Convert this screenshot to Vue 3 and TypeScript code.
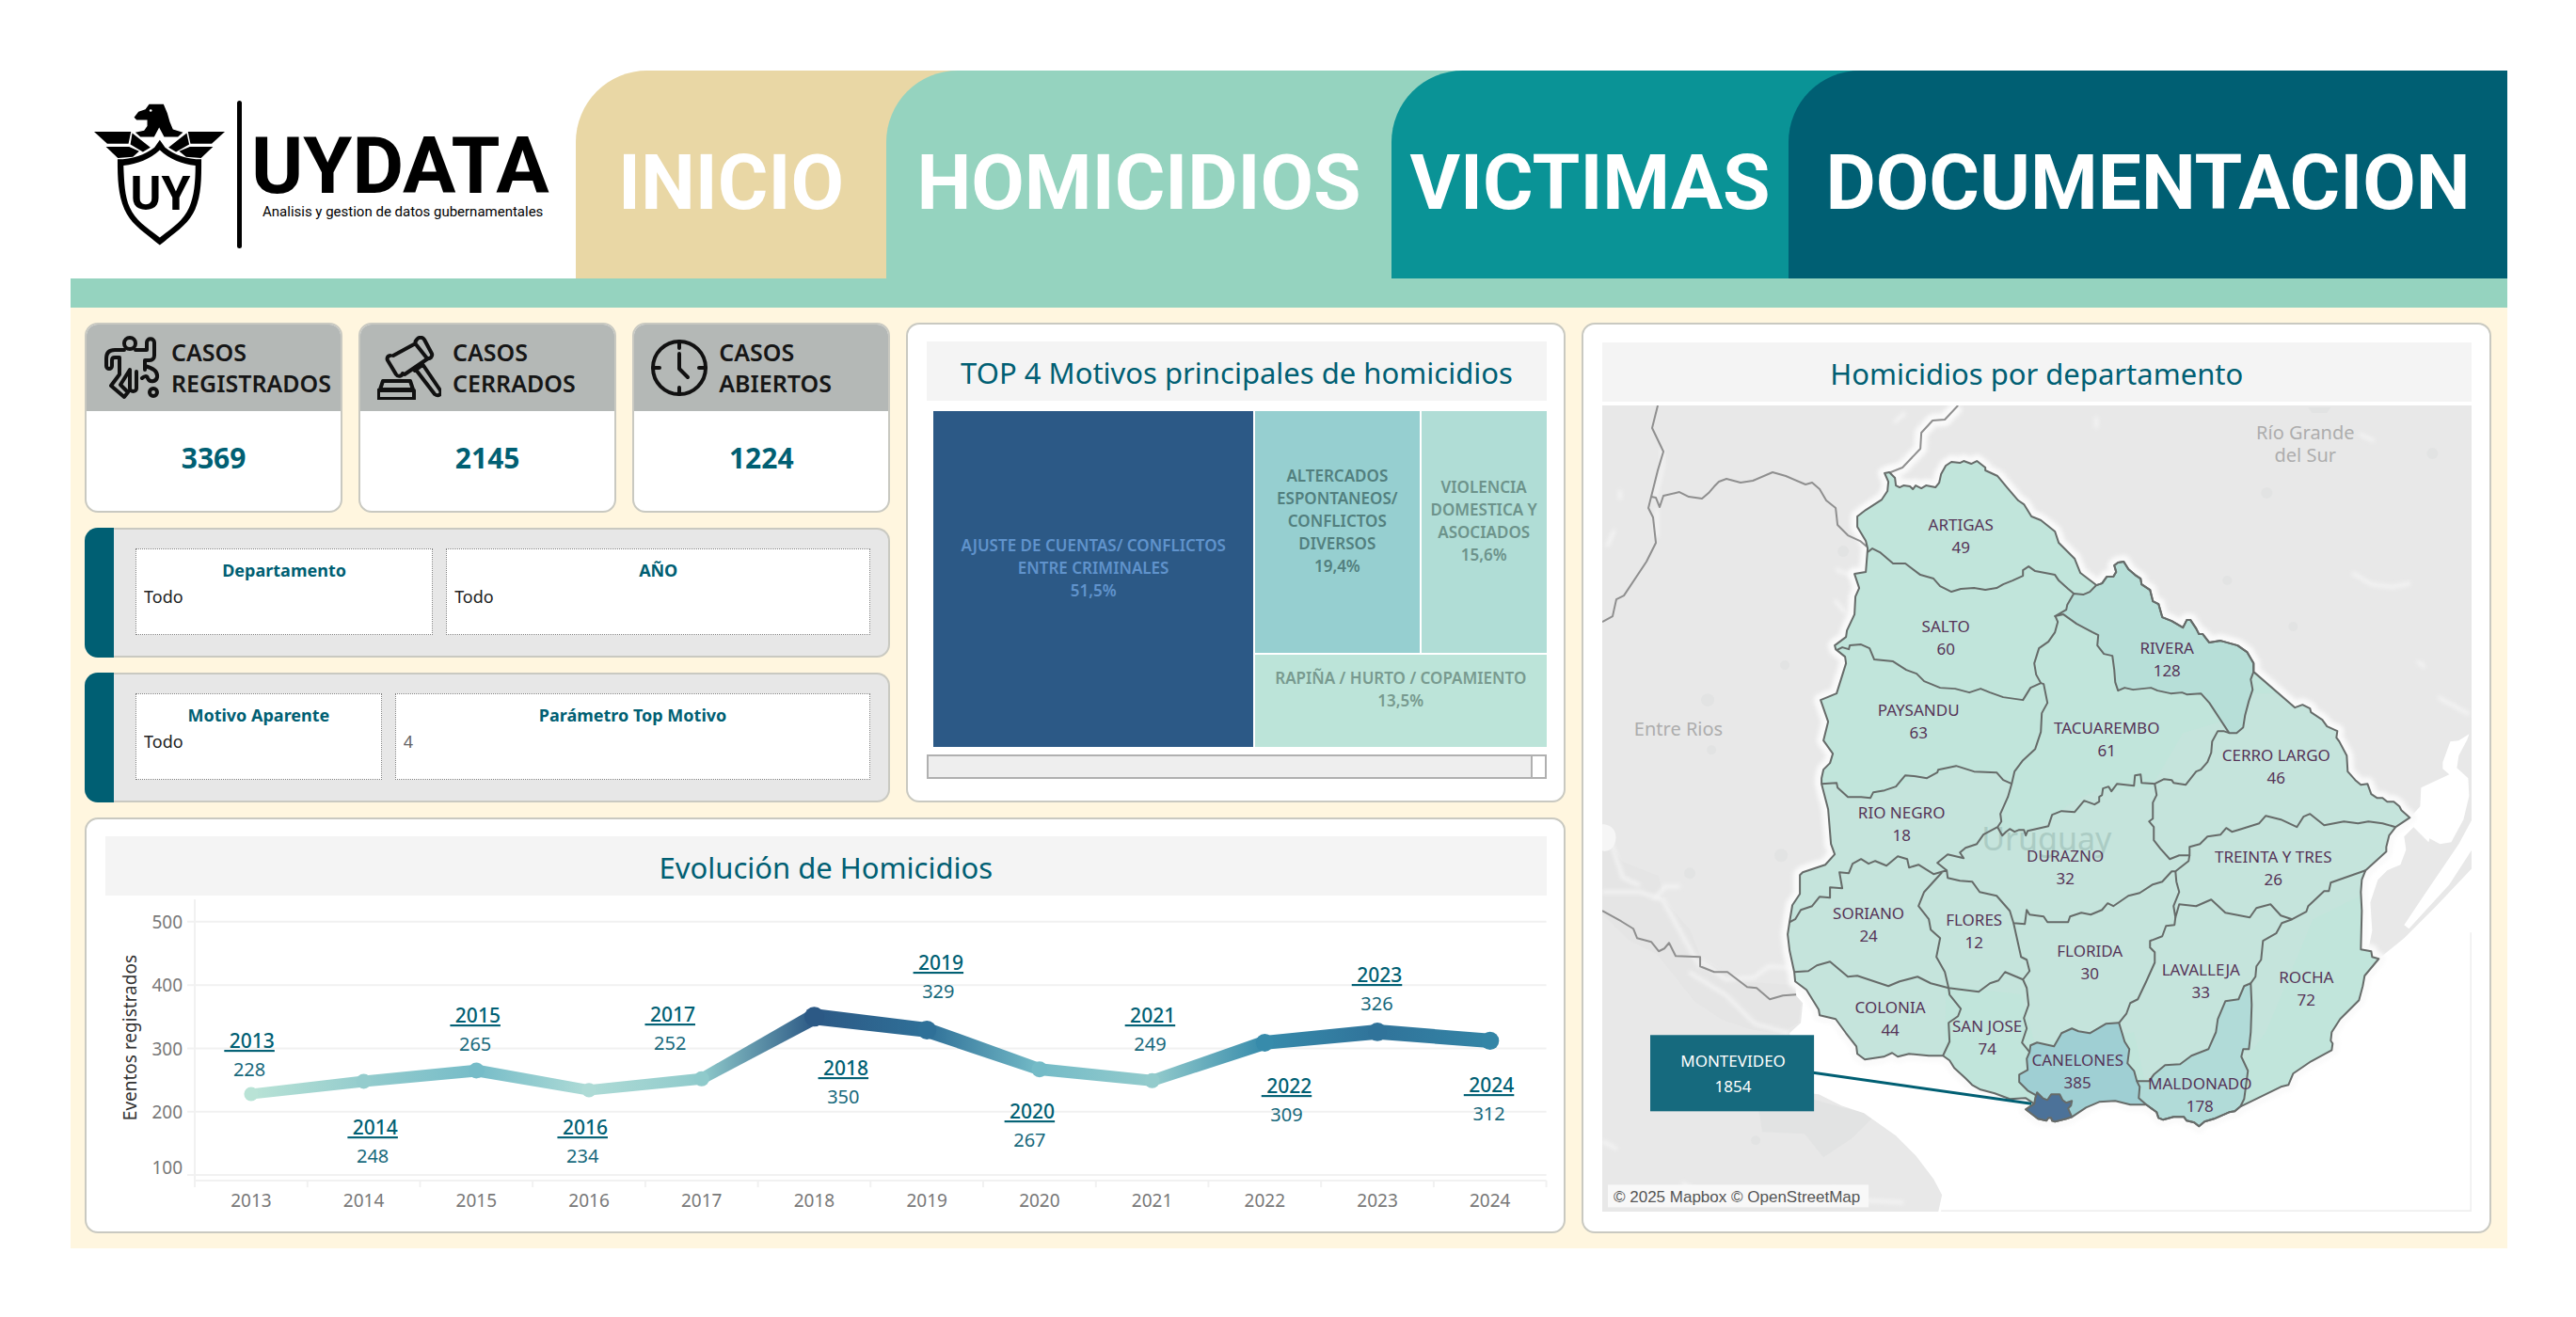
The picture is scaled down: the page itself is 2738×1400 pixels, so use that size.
<script setup lang="ts">
import { ref } from 'vue'

interface Tab { label: string; tone: string }
interface Kpi { title: string[]; value: number; icon: string }
interface Sample { year: number; value: number; x: number; y: number; color: string }
interface Department { name: string; total: number; x: number; y: number }

const tabs: Tab[] = [
  { label: 'INICIO', tone: 'sand' },
  { label: 'HOMICIDIOS', tone: 'mint' },
  { label: 'VICTIMAS', tone: 'teal' },
  { label: 'DOCUMENTACION', tone: 'deep' },
]

const kpis: Kpi[] = [
  { title: ['CASOS', 'REGISTRADOS'], value: 3369, icon: 'body' },
  { title: ['CASOS', 'CERRADOS'], value: 2145, icon: 'gavel' },
  { title: ['CASOS', 'ABIERTOS'], value: 1224, icon: 'clock' },
]

const departamento = ref('Todo')
const anio = ref('Todo')
const motivo = ref('Todo')
const topMotivo = ref('4')

// x / y give the place of the year caption inside the plot
const samples: Sample[] = [
  { year: 2013, value: 228, x: 153, y: 162, color: '#b9e3d6' },
  { year: 2014, value: 248, x: 284, y: 254, color: '#94cccd' },
  { year: 2015, value: 265, x: 393, y: 135, color: '#76bcc8' },
  { year: 2016, value: 234, x: 507, y: 254, color: '#aedbd6' },
  { year: 2017, value: 252, x: 600, y: 134, color: '#8fcacb' },
  { year: 2018, value: 350, x: 784, y: 191, color: '#2c5985' },
  { year: 2019, value: 329, x: 885, y: 79, color: '#2f7098' },
  { year: 2020, value: 267, x: 982, y: 237, color: '#74bbc7' },
  { year: 2021, value: 249, x: 1110, y: 135, color: '#93cbcc' },
  { year: 2022, value: 309, x: 1255, y: 210, color: '#378bab' },
  { year: 2023, value: 326, x: 1351, y: 92, color: '#30739a' },
  { year: 2024, value: 312, x: 1470, y: 209, color: '#3485a6' },
]

const plotLeft = 95
const plotRight = 1531
const band = (plotRight - plotLeft) / samples.length
const px = (i: number) => plotLeft + band * (i + 0.5)
const py = (v: number) => 297 - (v - 100) * 0.673
const thick = (v: number) => 11 + ((v - 228) / 122) * 6

const segments = samples.slice(1).map((s, i) => {
  const p = samples[i]
  const x1 = px(i), x2 = px(i + 1), y1 = py(p.value), y2 = py(s.value)
  const len = Math.hypot(x2 - x1, y2 - y1)
  const nx = -(y2 - y1) / len, ny = (x2 - x1) / len
  const a = thick(p.value) / 2, b = thick(s.value) / 2
  const pts = [
    [x1 + nx * a, y1 + ny * a], [x2 + nx * b, y2 + ny * b],
    [x2 - nx * b, y2 - ny * b], [x1 - nx * a, y1 - ny * a],
  ]
  return { id: `seg-${s.year}`, from: p.color, to: s.color, points: pts.map((q) => q.join(',')).join(' '), x1, x2 }
})

const yTicks = [
  { v: 500, ty: 35 }, { v: 400, ty: 102 }, { v: 300, ty: 170 }, { v: 200, ty: 237 }, { v: 100, ty: 296 },
]

const outline = '300,72 305,71 311,77 312,85 316,87 320,85 327,86 330,89 333,85 339,88 344,85 354,87 358,82 360,73 365,64 371,60 380,61 384,59 392,62 398,59 407,66 407,69 420,75 430,87 442,101 448,105 456,118 466,122 481,134 485,146 498,159 502,163 508,178 525,191 531,189 536,182 543,182 546,177 544,170 548,167 554,166 559,174 566,180 572,184 573,190 582,196 585,208 591,211 595,225 605,229 617,236 621,228 625,228 631,237 634,243 638,243 645,252 657,250 675,255 685,262 692,274 692,283 736,321 744,318 752,322 753,326 765,334 770,341 781,346 780,353 783,357 791,372 792,389 800,398 806,403 813,402 817,413 823,417 829,417 834,421 841,421 847,426 849,430 858,438 843,448 836,457 833,469 833,474 811,494 807,504 806,517 807,537 806,578 817,580 818,586 825,588 810,606 808,617 804,632 784,652 775,666 774,675 776,678 775,685 753,697 734,710 729,722 721,724 678,745 672,750 666,751 650,758 640,761 634,766 629,762 621,760 618,756 607,756 596,759 591,757 589,751 578,743 561,743 545,739 528,740 514,746 499,756 493,758 481,761 478,760 477,757 474,757 472,760 463,758 450,748 459,742 450,736 433,737 417,731 402,727 393,722 386,715 374,704 369,696 362,691 347,691 326,689 314,692 308,688 299,692 279,695 271,689 270,681 259,667 248,652 231,648 230,642 217,621 205,612 204,602 199,579 197,562 199,549 202,531 210,519 210,499 213,496 237,488 247,477 243,466 240,429 233,402 233,396 235,387 242,380 245,370 235,356 240,336 232,313 249,306 259,274 258,267 248,259 247,255 259,246 260,239 268,222 269,203 273,194 268,179 280,177 282,152 280,144 271,129 271,118 280,111 297,100 303,91 304,81'

const rivera = '501,200 511,201 518,198 525,191 531,189 536,182 543,182 546,177 544,170 548,167 554,166 559,174 566,180 572,184 573,190 582,196 585,208 591,211 595,225 605,229 617,236 621,228 625,228 631,237 634,243 638,243 645,252 657,250 675,255 685,262 692,274 692,283 689,291 691,302 687,314 683,329 681,342 674,348 666,348 645,316 636,306 621,307 616,305 604,306 590,303 583,300 564,302 555,300 548,303 545,294 544,281 542,266 533,264 526,255 527,244 521,241 504,232 490,222 481,224 493,217 494,212'
const canelones = '549,656 555,676 560,684 558,699 565,707 568,718 571,724 570,736 578,743 561,743 545,739 528,740 514,746 499,756 462,745 459,732 452,728 443,719 443,711 452,706 451,694 454,687 455,680 462,677 480,681 488,667 499,662 506,665 518,667 535,657'
const maldonado = '689,614 690,637 689,666 687,684 681,684 679,692 686,707 682,737 678,745 672,750 666,751 650,758 640,761 634,766 629,762 621,760 618,756 607,756 596,759 591,757 589,751 578,743 570,736 571,724 568,718 581,718 586,711 598,701 614,700 626,691 644,684 652,666 654,652 662,633 676,631 682,617'
const montevideo = '499,756 493,758 481,761 478,760 477,757 474,757 472,760 463,758 450,748 459,742 460,736 462,730 468,736 473,738 477,732 486,732 489,738 493,741 499,739 498,744 495,747'

const borders: string[] = [
  '282,156 287,152 295,156 309,168 322,168 338,180 352,184 359,192 371,198 381,195 395,194 407,196 419,194 426,190 436,186 447,181 447,175 453,171 460,176 481,180 485,186 495,195 501,200',
  '481,223 484,230 481,241 474,251 464,258 459,274 461,286 466,295',
  '249,260 255,257 262,259 263,255 275,254 284,258 289,270 309,272 323,281 334,285 342,293 359,300 375,301 390,305 402,301 412,305 426,310 447,313 455,300 466,295 469,296 471,306 473,316 467,327 466,347 460,365 447,377 438,389 435,402 431,416 423,434 424,442 420,448 405,456 398,466 386,470 380,475 384,481 367,477 356,486 366,494',
  '233,402 249,401 250,406 261,416 275,416 285,417 288,411 300,409 312,405 322,393 333,394 345,396 356,390 357,387 376,383 395,389 419,390 426,398 435,402',
  '666,348 660,346 654,346 648,357 647,369 643,379 636,387 631,389 620,403 607,401 605,398 597,397 587,402 573,401 572,392 566,393 565,404 547,402 541,410 538,405 532,407 531,414 528,416 528,421 523,424 512,420 502,432 488,431 478,435 474,447 452,452 450,457 448,451 443,451 438,453 433,450 429,453 425,457 420,448',
  '199,549 205,546 211,536 223,532 231,522 242,523 242,512 255,513 252,496 262,497 266,487 275,482 283,487 290,484 302,489 314,479 324,482 326,491 336,488 352,498 366,494 367,502 380,505 393,506 401,517 419,521 433,537 437,550 449,551 451,536 454,541 469,543 473,549 495,549 497,543 509,539 519,541 531,536 537,529 543,532 559,521 571,518 585,509 595,506 605,495 609,495 623,484 624,478',
  '361,496 342,517 336,532 347,546 349,557 359,566 355,586 364,602 368,619',
  '587,402 589,414 585,422 585,439 581,442 586,448 586,462 593,471 603,482 613,478 624,478 624,469 635,466 643,458 657,456 663,449 669,453 679,450 698,444 705,436 721,440 738,448 745,437 752,434 767,446 788,442 803,444 814,442 829,444 843,448',
  '811,494 774,507 772,516 767,516 750,532 748,538 733,546 722,550 716,561 702,569 700,589 695,596 694,607 689,614',
  '609,495 610,506 613,517 607,532 609,544 613,530 631,532 647,525 662,539 688,544 695,534 710,530 721,542 733,546',
  '609,544 608,552 599,553 595,564 582,569 582,576 587,581 587,592 578,612 569,631 561,635 557,646 549,656',
  '437,550 445,586 451,589 454,601 447,610 451,619 453,637 448,651 451,662 446,677 454,687',
  '204,602 219,601 228,595 242,591 261,607 271,606 304,617 316,612 335,607 349,614 368,619 400,623 412,614 421,611 428,602 447,610',
  '368,619 369,626 381,641 378,649 368,656 369,676 362,691',
  '549,656 555,676 560,684 558,699 565,707 568,718',
  '549,656 535,657 518,667 506,665 499,662 488,667 480,681 462,677 455,680 454,687 451,694 452,706 443,711 443,719 452,728 461,733',
]

const rivers: string[] = [
  '59,0 53,24 65,49 59,69 52,97 49,109 54,119 57,146 47,166 23,202 15,206 11,224 0,230',
  '52,97 57,98 61,108 65,96 82,92 92,97 106,99 113,93 119,86 124,81 132,78 147,82 160,80 181,71 195,75 216,84 223,82 231,89 238,101 248,109 250,127 261,138 274,144 281,150',
  '0,537 20,548 33,556 37,566 52,570 60,580 66,577 71,571 78,585 104,586 104,596 119,602 133,602 154,618 164,619 178,631 192,627 206,626',
]

const departments: Department[] = [
  { name: 'ARTIGAS', total: 49, x: 381, y: 133 },
  { name: 'SALTO', total: 60, x: 365, y: 241 },
  { name: 'PAYSANDU', total: 63, x: 336, y: 330 },
  { name: 'RIVERA', total: 128, x: 600, y: 264 },
  { name: 'TACUAREMBO', total: 61, x: 536, y: 349 },
  { name: 'CERRO LARGO', total: 46, x: 716, y: 378 },
  { name: 'RIO NEGRO', total: 18, x: 318, y: 439 },
  { name: 'DURAZNO', total: 32, x: 492, y: 485 },
  { name: 'TREINTA Y TRES', total: 26, x: 713, y: 486 },
  { name: 'SORIANO', total: 24, x: 283, y: 546 },
  { name: 'FLORES', total: 12, x: 395, y: 553 },
  { name: 'FLORIDA', total: 30, x: 518, y: 586 },
  { name: 'LAVALLEJA', total: 33, x: 636, y: 606 },
  { name: 'ROCHA', total: 72, x: 748, y: 614 },
  { name: 'COLONIA', total: 44, x: 306, y: 646 },
  { name: 'SAN JOSE', total: 74, x: 409, y: 666 },
  { name: 'CANELONES', total: 385, x: 505, y: 702 },
  { name: 'MALDONADO', total: 178, x: 635, y: 727 },
]
</script>

<template>
  <div class="page">
    <header class="top">
      <div class="brand">
        <svg class="emblem" viewBox="30 40 418 453" aria-hidden="true">
          <path d="M206 42h46l12 28 8 28 10 24 32 10-16 14h-44l-16-30-16 30h-44l-16-14 28-6 10-14v-20h-34l-8-8 14-18 22-8z" />
          <circle cx="211" cy="62" r="4" fill="#fff" />
          <path d="M30 130h118l-8 38H72zM68 178h74l32 14-20 18-48 4zM152 134l58 46-24 14-40-24z" />
          <path d="M448 130H330l8 38h68zM410 178h-74l-34 14 22 18 48 4zM326 134l-58 46 24 14 42-24z" />
          <path d="M240 156l-17 24c-30 24-72 38-118 38 0 64 2 112 22 160 20 46 58 70 113 114 55-44 93-68 113-114 20-48 20-96 20-160-46 0-88-14-116-38z" />
          <path d="M240 188c-32 30-70 44-116 50 2 54 4 98 20 134 18 40 50 62 96 96 46-34 76-56 94-96 16-36 20-80 20-134-46-6-82-20-114-50z" fill="#fff" />
          <text x="242" y="380" text-anchor="middle">UY</text>
        </svg>
        <span class="rule"></span>
        <div class="wordmark">
          <strong>UYDATA</strong>
          <small>Analisis y gestion de datos gubernamentales</small>
        </div>
      </div>
      <nav class="tabs">
        <div v-for="t in tabs" :key="t.label" class="tab" :class="t.tone">
          <a href="#">{{ t.label }}</a>
        </div>
      </nav>
    </header>

    <main class="board">
      <div class="left">
        <div class="summary">
          <div class="controls">
            <div class="kpis">
              <section v-for="k in kpis" :key="k.icon" class="card kpi">
                <h2>
                  <svg v-if="k.icon === 'body'" viewBox="0 0 60 68" class="icon">
                    <circle cx="28" cy="8" r="6" />
                    <path d="M22 15h-10c-6 0-9 3-9 9v8c0 4 6 4 6 0v-6c0-2 1-3 3-3h5v18l-9 12 14 12 4-5-8-8 10-16v20c0 4 7 4 7 0v-18M34 15h12V7c0-5 8-5 8 0v14c0 3-2 5-5 5h-5v10M44 32c8 2 14 5 13 12-1 5-8 6-10 1-1-3-4-2-6 0" />
                    <circle cx="53" cy="60" r="4" />
                  </svg>
                  <svg v-else-if="k.icon === 'gavel'" viewBox="0 0 68 68" class="icon">
                    <path d="M42 4c2-3 6-3 8 0l8 15c1 3-2 6-5 5L41 9c-1-2 0-4 1-5zM14 21c-3 0-4 3-3 5l9 15c2 3 6 2 7-1M39 9L17 21M54 24L29 41M41 36l20 26c4 3 8 0 6-4L48 30M40 37l8-6M6 48h29l3 9H3zM1 58h38v9H1z" />
                  </svg>
                  <svg v-else viewBox="0 0 60 68" class="icon">
                    <circle cx="30" cy="34" r="28" />
                    <path d="M30 19v16l9 9M30 6v7M30 55v7M2 34h7M51 34h7" />
                  </svg>
                  <span>{{ k.title[0] }}<br>{{ k.title[1] }}</span>
                </h2>
                <p>{{ k.value }}</p>
              </section>
            </div>
            <form class="filter first" @submit.prevent>
              <div class="field">
                <label for="departamento">Departamento</label>
                <select id="departamento" v-model="departamento"><option>Todo</option></select>
              </div>
              <div class="field">
                <label for="anio">AÑO</label>
                <select id="anio" v-model="anio"><option>Todo</option></select>
              </div>
            </form>
            <form class="filter second" @submit.prevent>
              <div class="field">
                <label for="motivo">Motivo Aparente</label>
                <select id="motivo" v-model="motivo"><option>Todo</option></select>
              </div>
              <div class="field">
                <label for="top">Parámetro Top Motivo</label>
                <input id="top" v-model="topMotivo" type="text">
              </div>
            </form>
          </div>

          <section class="card panel motives">
            <h2>TOP 4 Motivos principales de homicidios</h2>
            <div class="treemap">
              <div class="tile t1">AJUSTE DE CUENTAS/ CONFLICTOS<br>ENTRE CRIMINALES<br>51,5%</div>
              <div class="tile t2">ALTERCADOS<br>ESPONTANEOS/<br>CONFLICTOS<br>DIVERSOS<br>19,4%</div>
              <div class="tile t3">VIOLENCIA<br>DOMESTICA Y<br>ASOCIADOS<br>15,6%</div>
              <div class="tile t4">RAPIÑA / HURTO / COPAMIENTO<br>13,5%</div>
            </div>
            <div class="scroll"><span></span></div>
          </section>
        </div>

        <section class="card panel evolution">
          <h2>Evolución de Homicidios</h2>
          <svg class="chart" viewBox="0 0 1531 338">
            <defs>
              <linearGradient v-for="s in segments" :id="s.id" :key="s.id" gradientUnits="userSpaceOnUse" :x1="s.x1" :x2="s.x2" y1="0" y2="0">
                <stop offset="0" :stop-color="s.from" />
                <stop offset="1" :stop-color="s.to" />
              </linearGradient>
            </defs>
            <g class="grid">
              <line v-for="t in yTicks" :key="t.v" :x1="plotLeft - 8" :x2="plotRight" :y1="py(t.v)" :y2="py(t.v)" />
              <line :x1="plotLeft" :x2="plotLeft" y1="4" y2="310" />
              <line :x1="plotLeft" :x2="plotRight" y1="303" y2="303" />
              <line v-for="(s, i) in samples" :key="s.year" :x1="plotLeft + band * (i + 1)" :x2="plotLeft + band * (i + 1)" y1="303" y2="310" />
            </g>
            <g class="axis">
              <text v-for="t in yTicks" :key="t.v" x="82" :y="t.ty" text-anchor="end">{{ t.v }}</text>
              <text v-for="(s, i) in samples" :key="s.year" :x="px(i)" y="331" text-anchor="middle">{{ s.year }}</text>
            </g>
            <text class="axis-title" transform="translate(33 151) rotate(-90)" text-anchor="middle">Eventos registrados</text>
            <polygon v-for="s in segments" :key="s.id" :points="s.points" :fill="`url(#${s.id})`" />
            <circle v-for="(s, i) in samples" :key="s.year" :cx="px(i)" :cy="py(s.value)" :r="thick(s.value) / 2 + 2" :fill="s.color" />
            <g class="captions">
              <g v-for="s in samples" :key="s.year">
                <text class="year" :x="s.x" :y="s.y" text-anchor="middle">&nbsp;{{ s.year }}</text>
                <text :x="s.x" :y="s.y + 30" text-anchor="middle">{{ s.value }}</text>
              </g>
            </g>
          </svg>
        </section>
      </div>

      <section class="card panel geo">
        <h2>Homicidios por departamento</h2>
        <svg class="map" viewBox="0 0 924 857">
          <defs>
            <filter id="soft" x="-10%" y="-10%" width="120%" height="120%"><feGaussianBlur stdDeviation="2" /></filter>
            <clipPath id="land"><polygon :points="outline" /></clipPath>
          </defs>
          <rect width="924" height="857" fill="#e8e8e8" />
          <g fill="#e2e3e3">
            <path d="M0 455l22 30 38 15 5 25 28 32 12 30 40 25 60 4 6 20-3 20-20 12-30-5-30-10-30-20-40-50-30-15-28-28z" opacity=".6" />
            <path d="M165 740l40-8 50 14 35 8-25 25-30 20-20-25-45-2z" />
            <circle cx="112" cy="313" r="7" /><circle cx="194" cy="276" r="5" /><circle cx="256" cy="155" r="6" />
            <circle cx="706" cy="93" r="6" /><circle cx="882" cy="51" r="6" /><circle cx="664" cy="186" r="5" /><circle cx="734" cy="235" r="5" />
            <circle cx="116" cy="366" r="5" /><circle cx="93" cy="497" r="6" /><circle cx="190" cy="478" r="7" /><circle cx="163" cy="781" r="5" />
            <path d="M750 2h24l-4 6h-16z" />
          </g>
          <g fill="none" stroke="#f7f7f7" stroke-width="3" filter="url(#soft)">
            <path d="M64 45v20l-8 34M58 110v30M5 150l8-18M19 90v10M310 18l12-10M247 207l12 14M248 174l20 8M525 12v12M804 30l16 8M797 178l20 12 22 3 20-4M888 310l33 18M866 272l8 6" />
            <path d="M0 517h40l24 8 40 72M8 460l14 42 18 8M55 525l12-14h16M92 602l40 25 30 30 36 10M105 590l26 20 30-2 16-12 30 2M0 782l16 8M85 826l20 12M245 832l14 8M280 845l40 2" />
          </g>
          <path d="M0 445c12 0 16 10 14 18-2 8-8 12-14 10z" fill="#f6f6f6" />
          <path d="M205 612l1 15 7 8-2 21-12 11 15 63 16 2 24 12 24 8 34 24 21 21 19 25 9 17-4 18h567V492l-38 40-34 34-27 22L560 500 300 600z" fill="#fff" />
          <g fill="#fff">
            <path d="M921 349l-11 7-9 1-8 22v7l7 6-30 14-1 20-11 12 14 11 7 11 11 6 12-2 13-24 6-25-1-19-12-11 2-13 9-17z" />
            <path d="M924 440l-14 26-38 56-20 30 5 4 43-47 24-37z" />
            <path d="M858 438l-15 10-10 26-22 20-5 84 8 0 4-20-2-30 8-24 10-10 14-6 6-16-2-14 10-10 16 16 2-8-10-12z" />
          </g>
          <path d="M378 0l-14 15-13 1-12 13-1 17-19 20-15 6" class="halo" />
          <polygon :points="outline" class="halo" />
          <g class="river">
            <polyline v-for="r in rivers" :key="r" :points="r" />
            <path d="M378 0l-14 15-13 1-12 13-1 17-19 20-15 6" />
          </g>
          <polygon :points="outline" fill="#c1e5db" />
          <g clip-path="url(#land)">
            <path d="M180 402h70l12 15h24l27-11 21-11 23-4 20-7 43 7 16 12-15 46 30 5 26-16 22-16 24-12 60-4 34-58 40-12 18-30h60l180 140-40 40-120 60-50 120-60 80-60 10-20-90-90 10-10 20-20-70-80-10-1 90H200z" fill="#c5e4dc" />
            <polygon :points="rivera" fill="#b7dfd8" />
            <polygon :points="maldonado" fill="#b1dbd8" />
            <polygon :points="canelones" fill="#9fcfd3" />
          </g>
          <text class="country" x="403" y="473">Uruguay</text>
          <g class="border">
            <polyline v-for="b in borders" :key="b" :points="b" />
            <polygon :points="rivera" />
            <polygon :points="maldonado" />
            <polygon :points="outline" />
            <polygon :points="montevideo" fill="#4c7299" />
          </g>
          <g class="place">
            <text x="81" y="351" text-anchor="middle">Entre Rios</text>
            <text x="747" y="36" text-anchor="middle">Río Grande</text>
            <text x="747" y="60" text-anchor="middle">del Sur</text>
          </g>
          <g class="names">
            <g v-for="d in departments" :key="d.name">
              <text :x="d.x" :y="d.y" text-anchor="middle">{{ d.name }}</text>
              <text :x="d.x" :y="d.y + 24" text-anchor="middle">{{ d.total }}</text>
            </g>
          </g>
          <line x1="224" y1="709" x2="456" y2="742" stroke="#005f73" stroke-width="3" />
          <rect x="51" y="669" width="174" height="81" fill="#166a7e" />
          <g class="names inverse">
            <text x="139" y="703" text-anchor="middle">MONTEVIDEO</text>
            <text x="139" y="730" text-anchor="middle">1854</text>
          </g>
          <rect x="6" y="828" width="277" height="24" fill="#f8f8f8" />
          <text class="credit" x="12" y="847">© 2025 Mapbox © OpenStreetMap</text>
          <path d="M360 856h563V560" fill="none" stroke="#efefef" stroke-width="2" />
        </svg>
      </section>
    </main>
  </div>
</template>

<style>
body { margin: 0; background: #fff; }
</style>

<style scoped>
* { box-sizing: border-box; }
.page { padding: 75px 73px 73px 75px; font-family: "Noto Sans", "Open Sans", sans-serif; color: #005f73; }
h2, p { margin: 0; }

.top { display: grid; grid-template-columns: 537fr 2053fr; border-bottom: 31px solid #95d3bf; }
.brand { display: flex; align-items: center; padding-left: 25px; }
.emblem { width: 139px; height: 151px; }
.emblem text { font: 700 150px Roboto, sans-serif; }
.rule { width: 5px; height: 157px; margin: 0 10px 0 13px; border-radius: 3px; background: #000; }
.wordmark { display: flex; flex-direction: column; color: #000; font-family: Roboto, sans-serif; }
.wordmark strong { font-size: 84px; font-weight: 700; line-height: 78px; }
.wordmark small { padding-left: 12px; font-size: 15px; line-height: 18px; white-space: nowrap; }
.tabs { display: grid; grid-template-columns: 330fr 537fr 422fr 764fr; }
.tab a { display: flex; align-items: center; justify-content: center; height: 221px; padding-top: 16px; border-top-left-radius: 76px; color: #fff; font: 700 82px/96px Roboto, sans-serif; text-decoration: none; }
.sand a, .mint { background: #e9d7a5; }
.mint a, .teal { background: #95d3bf; }
.teal a, .deep { background: #0a9396; }
.deep a { background: #005f73; }

.board { display: grid; grid-template-columns: 1573fr 967fr; gap: 17px; padding: 16px 17px 16px 15px; background: #fff6df; }
.left { display: flex; flex-direction: column; gap: 16px; min-width: 0; }
.summary { display: grid; grid-template-columns: 856fr 700fr; gap: 17px; }
.card { border: 2px solid #c9c9c1; border-radius: 14px; background: #fff; }
.controls { display: flex; flex-direction: column; gap: 16px; }
.kpis { display: grid; grid-template-columns: repeat(3, 1fr); gap: 17px; }
.kpi { overflow: hidden; text-align: center; }
.kpi h2 { display: flex; align-items: center; gap: 12px; height: 92px; padding-left: 18px; background: #b4b8b6; color: #161616; font-size: 25px; font-weight: 600; line-height: 33px; text-align: left; }
.kpi p { padding-bottom: 6px; font-size: 30px; font-weight: 700; line-height: 100px; }
.icon { flex: none; height: 68px; fill: none; stroke: #111; stroke-width: 4; stroke-linejoin: round; stroke-linecap: round; }
.filter {
  display: grid; gap: 14px; height: 138px; padding: 20px 19px 22px 52px; border: 2px solid transparent; border-radius: 14px;
  background: linear-gradient(90deg, #005f73 31px, transparent 31px) border-box, linear-gradient(#e7e7e7, #e7e7e7) padding-box, #c9c9c1 border-box;
}
.filter.first { grid-template-columns: 316fr 451fr; }
.filter.second { grid-template-columns: 262fr 506fr; }
.field { display: flex; flex-direction: column; min-width: 0; padding: 8px; border: 1px dotted #808080; background: #fff; }
.field label { font-size: 18px; font-weight: 700; line-height: 28px; text-align: center; }
.field select, .field input { width: 100%; height: 28px; margin: 0; padding: 0; border: 0; background: none; color: #222; font: 18px/28px "Noto Sans", sans-serif; appearance: none; }
.field input { color: #666; }

.panel { padding: 18px; min-width: 0; }
.panel h2 { height: 63px; background: #f4f4f4; font-size: 31px; font-weight: 400; line-height: 66px; text-align: center; }
.motives { display: flex; flex-direction: column; padding: 18px 18px 23px 20px; }
.treemap { display: grid; flex: 1; grid-template-columns: 340fr 175fr 133fr; grid-template-rows: 257fr 98fr; gap: 2px; margin: 11px 0 8px 7px; }
.tile { display: flex; align-items: center; justify-content: center; padding-bottom: 24px; font-size: 17px; font-weight: 600; line-height: 24px; text-align: center; white-space: nowrap; }
.t1 { grid-row: 1 / 3; background: #2c5986; color: #6093cc; }
.t2 { background: #96cfd0; color: #527f7e; }
.t3 { background: #b0ddd6; color: #6d938b; }
.t4 { grid-column: 2 / 4; background: #bce4d9; color: #789a8f; }
.scroll { display: flex; height: 26px; border: 2px solid #b0b0b0; background: #fff; }
.scroll span { width: 98%; border-right: 2px solid #b0b0b0; background: #eee; }

.evolution { padding: 18px 18px 19px 20px; }
.chart, .map { display: block; width: 100%; height: auto; overflow: visible; }
.grid line { stroke: #f1f1f1; stroke-width: 2; }
.axis text { fill: #787878; font-size: 19px; }
.axis-title { fill: #333; font-size: 19px; }
.captions text { fill: #17697c; font-size: 20px; }
.captions .year { fill: #005f73; font-size: 21px; font-weight: 500; text-decoration: underline; }

.geo { padding: 19px 19px 20px 20px; }
.map { margin-top: 4px; overflow: hidden; }
.halo { fill: none; stroke: #fafafa; stroke-width: 14; stroke-linejoin: round; filter: url(#soft); }
.river { fill: none; stroke: #8f8f8f; stroke-width: 2; stroke-linejoin: round; }
.border { fill: none; stroke: #666b69; stroke-width: 2; stroke-linejoin: round; }
.country { fill: #abccc4; font-size: 34px; }
.place text { fill: #adadad; font-size: 20px; }
.names text { fill: #553457; font-size: 17px; }
.names.inverse text { fill: #fff; }
.credit { fill: #555; font: 17px "Liberation Sans", Arial, sans-serif; }
</style>
